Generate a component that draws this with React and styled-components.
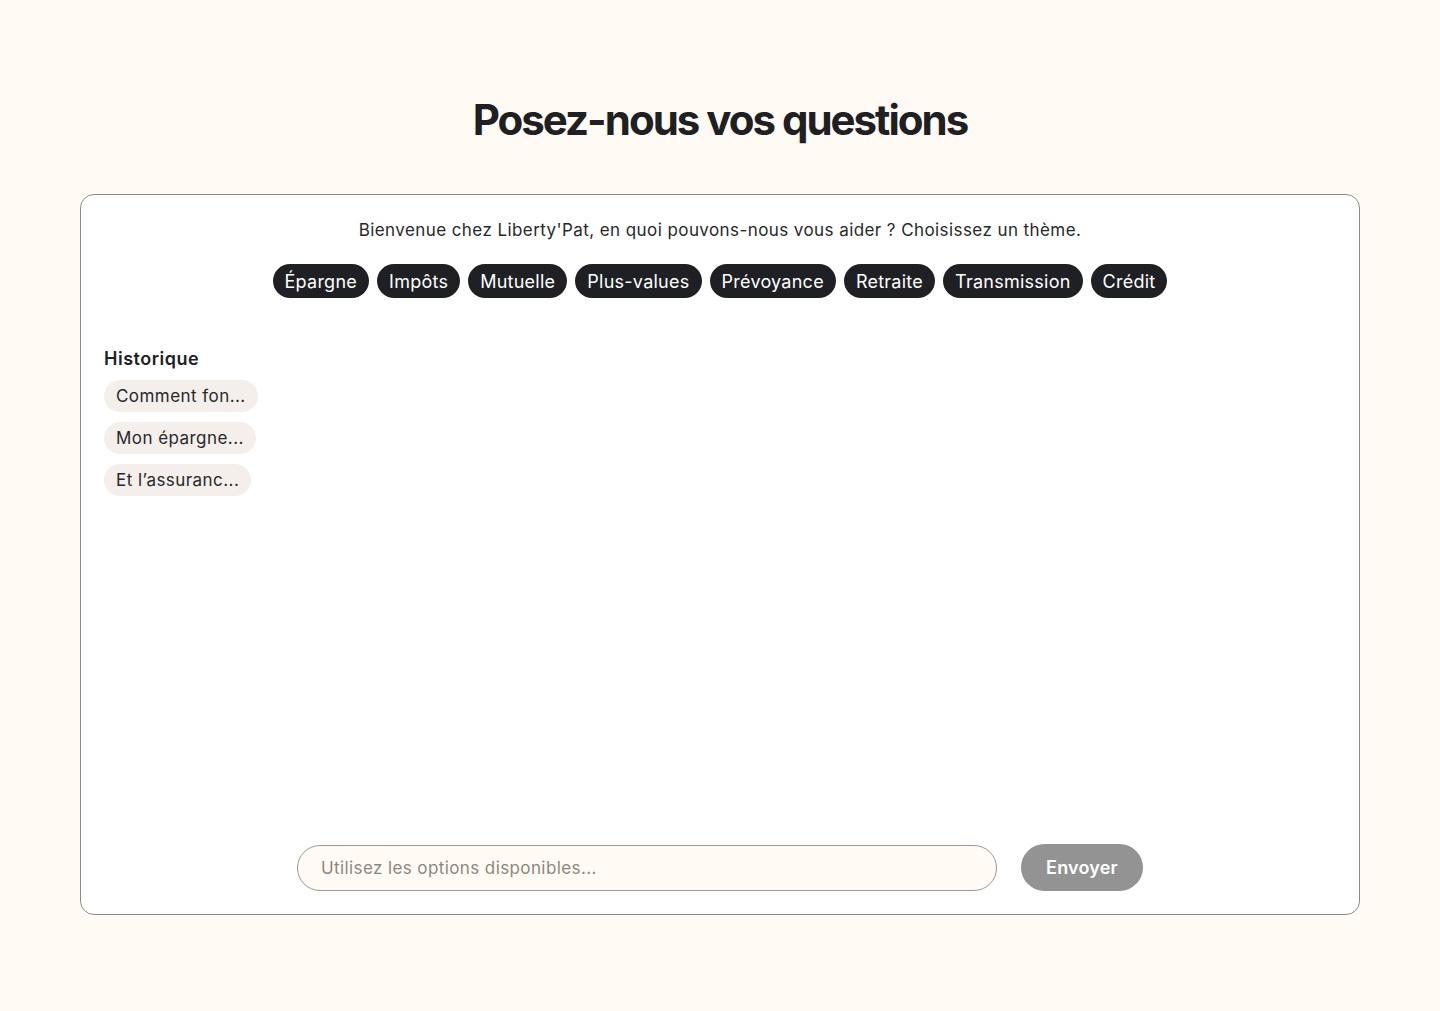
import styled, { createGlobalStyle } from "styled-components";

const GlobalStyle = createGlobalStyle`
  body {
    margin: 0;
    background: #fffbf4;
    font-family: Inter, "Noto Sans", sans-serif;
    color: #1f2023;
  }
`;

const Page = styled.main`
  display: flex;
  flex-direction: column;
  align-items: center;
  padding: 95px 80px 0;
`;

const Title = styled.h1`
  margin: 0 0 49px;
  font-size: 42px;
  line-height: 50px;
  font-weight: 700;
  letter-spacing: -2px;
  color: #1f2023;
`;

const Card = styled.section`
  box-sizing: border-box;
  width: 1280px;
  height: 721px;
  background: #fff;
  border: 1px solid #8d8b89;
  border-radius: 14px;
  padding: 23px;
  display: flex;
  flex-direction: column;
`;

const Welcome = styled.p`
  margin: 0;
  text-align: center;
  font-size: 17px;
  line-height: 24px;
  letter-spacing: 0.42px;
  color: #27282b;
`;

const Themes = styled.div`
  display: flex;
  justify-content: center;
  gap: 8px;
  margin-top: 22px;
`;

const Theme = styled.button`
  height: 34px;
  padding: 0 12px;
  border: none;
  border-radius: 17px;
  background: #1f2023;
  color: #fff;
  font-family: Inter, sans-serif;
  font-size: 18px;
  letter-spacing: 0.25px;
  cursor: pointer;
`;

const History = styled.div`
  display: flex;
  flex-direction: column;
  align-items: flex-start;
  gap: 10px;
  margin-top: 50px;
`;

const HistoryTitle = styled.h2`
  margin: 0;
  font-size: 18px;
  line-height: 22px;
  font-weight: 600;
  letter-spacing: 0.5px;
`;

const HistoryItem = styled.button`
  height: 32px;
  padding: 0 12px;
  border: none;
  border-radius: 16px;
  background: #f4efea;
  color: #27282b;
  font-family: Inter, sans-serif;
  font-size: 17px;
  letter-spacing: 0.45px;
  cursor: pointer;
`;

const Composer = styled.form`
  margin-top: auto;
  display: flex;
  justify-content: center;
  align-items: center;
  gap: 24px;
`;

const Input = styled.input`
  box-sizing: border-box;
  width: 700px;
  height: 46px;
  padding: 0 23px;
  border: 1px solid #9d968f;
  border-radius: 23px;
  background: #fffbf4;
  font-family: Inter, sans-serif;
  font-size: 17px;
  letter-spacing: 0.4px;
  color: #27282b;
  outline: none;
  &::placeholder {
    color: #8d8781;
  }
`;

const Send = styled.button`
  width: 122px;
  height: 47px;
  border: none;
  border-radius: 24px;
  background: #939393;
  color: #fff;
  font-family: Inter, sans-serif;
  font-size: 18px;
  font-weight: 600;
  letter-spacing: 0.2px;
`;

const themes = [
  "Épargne",
  "Impôts",
  "Mutuelle",
  "Plus-values",
  "Prévoyance",
  "Retraite",
  "Transmission",
  "Crédit",
];

const history = ["Comment fon...", "Mon épargne...", "Et l’assuranc..."];

export default function App() {
  return (
    <>
      <GlobalStyle />
      <Page>
        <Title>Posez-nous vos questions</Title>
        <Card>
          <Welcome>
            Bienvenue chez Liberty'Pat, en quoi pouvons-nous vous aider ? Choisissez un thème.
          </Welcome>
          <Themes>
            {themes.map((t) => (
              <Theme key={t}>{t}</Theme>
            ))}
          </Themes>
          <History>
            <HistoryTitle>Historique</HistoryTitle>
            {history.map((h) => (
              <HistoryItem key={h}>{h}</HistoryItem>
            ))}
          </History>
          <Composer onSubmit={(e) => e.preventDefault()}>
            <Input placeholder="Utilisez les options disponibles..." />
            <Send type="submit" disabled>
              Envoyer
            </Send>
          </Composer>
        </Card>
      </Page>
    </>
  );
}
